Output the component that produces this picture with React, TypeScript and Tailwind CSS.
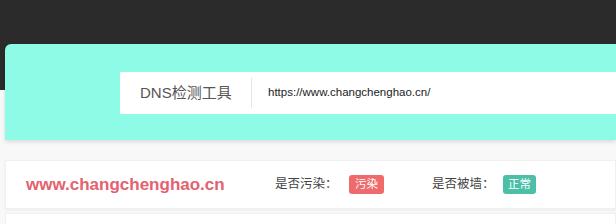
export default function App() {
  return (
    <div
      className="w-[616px] h-[224px] overflow-hidden bg-[linear-gradient(to_bottom,#2b2b2b_90px,#f8f8f8_90px)] pt-[44px] pl-[5px]"
      style={{ fontFamily: '"Liberation Sans", "Noto Sans CJK SC", sans-serif' }}
    >
      <div className="h-[96px] bg-[#8dfbe6] rounded-tl-[6px] shadow-[0_2px_4px_rgba(0,0,0,0.12)] pt-[28px] pl-[115px]">
        <div className="h-[42px] bg-white flex items-center">
          <div className="w-[132px] h-[30px] border-r border-[#e6e6e6] pl-[20px] flex items-center text-[15px] text-[#555]">
            DNS检测工具
          </div>
          <div className="pl-[16px] text-[11.5px] text-[#222]">https://www.changchenghao.cn/</div>
        </div>
      </div>

      <div className="mt-[20px] h-[49px] bg-white border border-[#f0f0f0] shadow-[0_1px_3px_rgba(0,0,0,0.06)] flex items-center">
        <div className="w-[269px] pl-[20px] text-[17px] font-bold text-[#e4626f]">www.changchenghao.cn</div>
        <div className="w-[74px] text-[12.5px] text-[#444]">是否污染：</div>
        <span className="h-[19px] px-[6px] flex items-center rounded-[3px] bg-[#ef6b6b] text-white text-[11.5px]">
          污染
        </span>
        <div className="ml-[48px] w-[71px] text-[12.5px] text-[#444]">是否被墙：</div>
        <span className="h-[19px] px-[5px] flex items-center rounded-[3px] bg-[#4dbfa7] text-white text-[11.5px]">
          正常
        </span>
      </div>

      <div className="mt-[4px] h-[20px] bg-white border border-[#f0f0f0]"></div>
    </div>
  );
}
